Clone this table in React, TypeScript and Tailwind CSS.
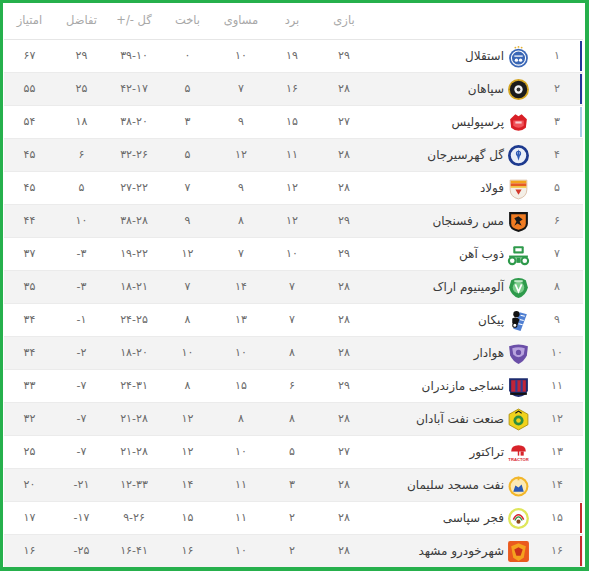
import React from "react";

type Row = {
  r: string;
  name: string;
  p: string;
  w: string;
  d: string;
  l: string;
  g: string;
  gd: string;
  pts: string;
  bar?: string;
};

const rows: Row[] = [
  { r: "۱", name: "استقلال", p: "۲۹", w: "۱۹", d: "۱۰", l: "۰", g: "۳۹-۱۰", gd: "۲۹", pts: "۶۷", bar: "bg-[#23389a]" },
  { r: "۲", name: "سپاهان", p: "۲۸", w: "۱۶", d: "۷", l: "۵", g: "۴۲-۱۷", gd: "۲۵", pts: "۵۵", bar: "bg-[#23389a]" },
  { r: "۳", name: "پرسپولیس", p: "۲۷", w: "۱۵", d: "۹", l: "۳", g: "۳۸-۲۰", gd: "۱۸", pts: "۵۴", bar: "bg-[#a9cbe6]" },
  { r: "۴", name: "گل گهرسیرجان", p: "۲۸", w: "۱۱", d: "۱۲", l: "۵", g: "۳۲-۲۶", gd: "۶", pts: "۴۵" },
  { r: "۵", name: "فولاد", p: "۲۸", w: "۱۲", d: "۹", l: "۷", g: "۲۷-۲۲", gd: "۵", pts: "۴۵" },
  { r: "۶", name: "مس رفسنجان", p: "۲۹", w: "۱۲", d: "۸", l: "۹", g: "۳۸-۲۸", gd: "۱۰", pts: "۴۴" },
  { r: "۷", name: "ذوب آهن", p: "۲۹", w: "۱۰", d: "۷", l: "۱۲", g: "۱۹-۲۲", gd: "-۳", pts: "۳۷" },
  { r: "۸", name: "آلومینیوم اراک", p: "۲۸", w: "۷", d: "۱۴", l: "۷", g: "۱۸-۲۱", gd: "-۳", pts: "۳۵" },
  { r: "۹", name: "پیکان", p: "۲۸", w: "۷", d: "۱۳", l: "۸", g: "۲۴-۲۵", gd: "-۱", pts: "۳۴" },
  { r: "۱۰", name: "هوادار", p: "۲۸", w: "۸", d: "۱۰", l: "۱۰", g: "۱۸-۲۰", gd: "-۲", pts: "۳۴" },
  { r: "۱۱", name: "نساجی مازندران", p: "۲۹", w: "۶", d: "۱۵", l: "۸", g: "۲۴-۳۱", gd: "-۷", pts: "۳۳" },
  { r: "۱۲", name: "صنعت نفت آبادان", p: "۲۸", w: "۸", d: "۸", l: "۱۲", g: "۲۱-۲۸", gd: "-۷", pts: "۳۲" },
  { r: "۱۳", name: "تراکتور", p: "۲۷", w: "۵", d: "۱۰", l: "۱۲", g: "۲۱-۲۸", gd: "-۷", pts: "۲۵" },
  { r: "۱۴", name: "نفت مسجد سلیمان", p: "۲۸", w: "۳", d: "۱۱", l: "۱۴", g: "۱۲-۳۳", gd: "-۲۱", pts: "۲۰" },
  { r: "۱۵", name: "فجر سپاسی", p: "۲۸", w: "۲", d: "۱۱", l: "۱۵", g: "۹-۲۶", gd: "-۱۷", pts: "۱۷", bar: "bg-[#c62d2d]" },
  { r: "۱۶", name: "شهرخودرو مشهد", p: "۲۸", w: "۲", d: "۱۰", l: "۱۶", g: "۱۶-۴۱", gd: "-۲۵", pts: "۱۶", bar: "bg-[#c62d2d]" },
];

function Logo({ i }: { i: number }) {
  const common = { width: 23, height: 23, viewBox: "0 0 22 22" };
  switch (i) {
    case 0:
      return (
        <svg {...common}>
          <circle cx="11" cy="12.5" r="9" fill="#3a67b6" />
          <circle cx="11" cy="12.5" r="6.8" fill="none" stroke="#fff" strokeWidth="1.1" />
          <rect x="7" y="10" width="8" height="1.2" fill="#fff" />
          <circle cx="9" cy="14.5" r="1.6" fill="#fff" />
          <circle cx="13" cy="14.5" r="1.6" fill="#fff" />
          <circle cx="8" cy="2.5" r="0.9" fill="#e4b233" />
          <circle cx="11" cy="1.8" r="0.9" fill="#e4b233" />
          <circle cx="14" cy="2.5" r="0.9" fill="#e4b233" />
        </svg>
      );
    case 1:
      return (
        <svg {...common}>
          <circle cx="11" cy="11" r="10" fill="#d4a521" />
          <circle cx="11" cy="11" r="8.3" fill="#1b1b1b" />
          <circle cx="11" cy="11" r="4" fill="#f3f3f3" />
          <circle cx="11" cy="11" r="1.8" fill="#333" />
        </svg>
      );
    case 2:
      return (
        <svg {...common}>
          <path d="M5 6 L8 3 L11 5 L14 3 L17 6 L19 8 L18 16 Q11 22 4 16 L3 8 Z" fill="#d91f26" />
          <path d="M6 9 H16 V14 Q11 18 6 14 Z" fill="#f1545a" />
          <rect x="8" y="10" width="6" height="2" fill="#fff" opacity="0.7" />
        </svg>
      );
    case 3:
      return (
        <svg {...common}>
          <circle cx="11" cy="11" r="10" fill="#1d3a8f" />
          <circle cx="11" cy="11" r="7.4" fill="#e9eef8" />
          <path d="M11 5 L12.5 11 L11 16 L9.5 11 Z" fill="#2f5bb5" />
          <circle cx="11" cy="9" r="2" fill="none" stroke="#2f5bb5" strokeWidth="1" />
        </svg>
      );
    case 4:
      return (
        <svg {...common}>
          <path d="M3 3 H19 V12 Q19 19 11 21 Q3 19 3 12 Z" fill="#f4efe7" stroke="#d9b9a0" strokeWidth="0.8" />
          <rect x="3.5" y="3.5" width="15" height="2.6" fill="#f2a41c" />
          <rect x="3.5" y="6.1" width="15" height="2.6" fill="#e65b24" />
          <rect x="3.5" y="8.7" width="15" height="1.6" fill="#f2c23a" />
          <path d="M8 12 L11 17 L14 12 Z" fill="#d3392c" />
        </svg>
      );
    case 5:
      return (
        <svg {...common}>
          <path d="M2 2 H20 V13 Q20 19 11 21 Q2 19 2 13 Z" fill="#151515" />
          <path d="M4 4 H18 V13 Q18 17.5 11 19 Q4 17.5 4 13 Z" fill="#ef7b22" />
          <path d="M7 8 L11 6 L15 9 L12 11 L14 15 L10 13 L7 15 L9 11 Z" fill="#1b1b1b" />
        </svg>
      );
    case 6:
      return (
        <svg {...common}>
          <rect x="6" y="3" width="10" height="7" rx="1" fill="#2e9a4b" />
          <rect x="8" y="5" width="6" height="3" fill="#fff" />
          <path d="M2 12 H20 V14 H2 Z" fill="#2e9a4b" />
          <circle cx="5" cy="17" r="3.2" fill="#fff" stroke="#2e9a4b" strokeWidth="2" />
          <circle cx="17" cy="17" r="3.2" fill="#fff" stroke="#2e9a4b" strokeWidth="2" />
          <rect x="9" y="14" width="4" height="5" fill="#2e9a4b" />
        </svg>
      );
    case 7:
      return (
        <svg {...common}>
          <path d="M4 4 Q11 0 18 4 L20 11 Q18 19 11 21 Q4 19 2 11 Z" fill="#2e9a4b" />
          <circle cx="11" cy="11" r="5.5" fill="#7ccc8c" />
          <path d="M8 8 L11 15 L14 8" fill="none" stroke="#fff" strokeWidth="1.6" />
          <rect x="7" y="4" width="8" height="2" fill="#bfe8c6" />
        </svg>
      );
    case 8:
      return (
        <svg {...common}>
          <path d="M12 3 L19 5 L13 21 L6 19 Z" fill="#4f7fd2" />
          <path d="M13 6 L17 7 M12 10 L16 11 M11 14 L15 15" stroke="#fff" strokeWidth="1" />
          <circle cx="9" cy="5" r="3" fill="#111" />
          <path d="M5 9 Q9 7 12 10 L10 15 L7 17 L5 13 Z" fill="#111" />
          <circle cx="7.5" cy="15.5" r="2" fill="#fff" stroke="#111" strokeWidth="1" />
        </svg>
      );
    case 9:
      return (
        <svg {...common}>
          <path d="M2 4 Q11 1 20 4 L19 13 Q16 19 11 21 Q6 19 3 13 Z" fill="#6b4fa8" />
          <path d="M5 6 Q11 4 17 6 L16 12 Q11 17 6 12 Z" fill="#b8a3de" />
          <circle cx="11" cy="10" r="2.5" fill="#6b4fa8" />
        </svg>
      );
    case 10:
      return (
        <svg {...common}>
          <path d="M2 3 H20 V15 Q18 20 11 21 Q4 20 2 15 Z" fill="#1d2b6e" />
          <rect x="4" y="5" width="14" height="11" fill="#c02538" />
          <rect x="8" y="5" width="2" height="11" fill="#2b3f96" />
          <rect x="13" y="5" width="2" height="11" fill="#2b3f96" />
          <rect x="3" y="17" width="16" height="2" fill="#111" />
        </svg>
      );
    case 11:
      return (
        <svg {...common}>
          <path d="M11 1 L20 6 L20 16 L11 21 L2 16 L2 6 Z" fill="#f1d21b" stroke="#a88b0d" strokeWidth="0.8" />
          <circle cx="11" cy="12" r="4.8" fill="#2e8f3f" />
          <circle cx="11" cy="12" r="2.2" fill="#f1d21b" />
          <path d="M8 5 L11 3 L14 5" fill="none" stroke="#111" strokeWidth="1" />
        </svg>
      );
    case 12:
      return (
        <svg {...common}>
          <path d="M4 10 Q4 4 11 4 Q18 4 18 10 Z" fill="#d8232a" />
          <rect x="10.3" y="9" width="1.4" height="5" fill="#d8232a" />
          <rect x="13" y="10" width="3" height="4" fill="#d8232a" />
          <text x="11" y="19.5" textAnchor="middle" fontSize="4" fontWeight="bold" fill="#d8232a" fontFamily="Liberation Sans, sans-serif">
            TRACTOR
          </text>
        </svg>
      );
    case 13:
      return (
        <svg {...common}>
          <circle cx="11" cy="12" r="9.5" fill="#f2b62a" />
          <circle cx="11" cy="12" r="7.5" fill="#fbe9b4" />
          <path d="M6 17 L8 11 L11 13 L14 10 L16 17 Z" fill="#2a59b5" />
          <path d="M11 2 L12 6 L10 6 Z" fill="#f2b62a" />
        </svg>
      );
    case 14:
      return (
        <svg {...common}>
          <circle cx="11" cy="11" r="10" fill="#dfe65a" />
          <circle cx="11" cy="11" r="7.8" fill="#fff" />
          <path d="M6 12 Q11 3 16 12" fill="none" stroke="#d7262b" strokeWidth="1.4" />
          <path d="M7.5 13 Q11 6 14.5 13" fill="none" stroke="#2e8f3f" strokeWidth="1.2" />
          <circle cx="11" cy="14" r="2" fill="#8a4a20" />
        </svg>
      );
    default:
      return (
        <svg {...common}>
          <rect x="1" y="1" width="20" height="20" rx="2" fill="#ea5a1e" />
          <path d="M4 6 L11 3 L18 6 L16 17 L11 20 L6 17 Z" fill="#f5a21f" />
          <path d="M7 9 L11 7 L15 9 L13 15 L9 15 Z" fill="#c9301b" />
        </svg>
      );
  }
}

const W = {
  rank: "w-[53px]",
  team: "w-[159px]",
  p: "w-[54px]",
  w: "w-[50px]",
  d: "w-[52px]",
  l: "w-[55px]",
  g: "w-[52px]",
  gd: "w-[53px]",
  pts: "w-[51px]",
};

export default function App() {
  return (
    <div
      className="w-[589px] h-[571px] bg-[#26b04c] pt-[3px] pl-[3px] pr-[4px] pb-[4px]"
      style={{ fontFamily: '"DejaVu Sans", "Noto Sans", sans-serif' }}
    >
      <div className="w-[582px] h-[564px] bg-white pl-[1px] pr-[2px] overflow-hidden" dir="rtl">
        <div className="flex h-[37px] items-center border-b border-[#e6e6e6] text-[11.5px] text-[#a8a8a8]">
          <div className={`${W.rank} shrink-0`} />
          <div className={`${W.team} shrink-0`} />
          <div className={`${W.p} shrink-0 text-center`}>بازی</div>
          <div className={`${W.w} shrink-0 text-center`}>برد</div>
          <div className={`${W.d} shrink-0 text-center`}>مساوی</div>
          <div className={`${W.l} shrink-0 text-center`}>باخت</div>
          <div className={`${W.g} shrink-0 text-center`}>گل -/+</div>
          <div className={`${W.gd} shrink-0 text-center`}>تفاضل</div>
          <div className={`${W.pts} shrink-0 text-center`}>امتیاز</div>
        </div>
        {rows.map((row, i) => (
          <div
            key={i}
            className={`flex h-[33px] items-center border-b border-[#ebebeb] text-[11px] text-[#6a6a6a] ${
              i % 2 === 1 ? "bg-[#f3f3f3]" : "bg-white"
            }`}
          >
            <div className={`${W.rank} shrink-0 h-full flex items-center relative`}>
              {row.bar && <div className={`absolute right-[1px] top-[1px] bottom-[1px] w-[2px] ${row.bar}`} />}
              <span className="w-full text-center pl-[1px] text-[#777]">{row.r}</span>
            </div>
            <div className={`${W.team} shrink-0 flex items-center gap-[3px]`}>
              <Logo i={i} />
              <span className="text-[12px] text-[#3a3a3a] whitespace-nowrap">{row.name}</span>
            </div>
            <div className={`${W.p} shrink-0 text-center`}>{row.p}</div>
            <div className={`${W.w} shrink-0 text-center`}>{row.w}</div>
            <div className={`${W.d} shrink-0 text-center`}>{row.d}</div>
            <div className={`${W.l} shrink-0 text-center`}>{row.l}</div>
            <div className={`${W.g} shrink-0 text-center`} dir="ltr">{row.g}</div>
            <div className={`${W.gd} shrink-0 text-center`} dir="ltr">{row.gd}</div>
            <div className={`${W.pts} shrink-0 text-center`}>{row.pts}</div>
          </div>
        ))}
      </div>
    </div>
  );
}
